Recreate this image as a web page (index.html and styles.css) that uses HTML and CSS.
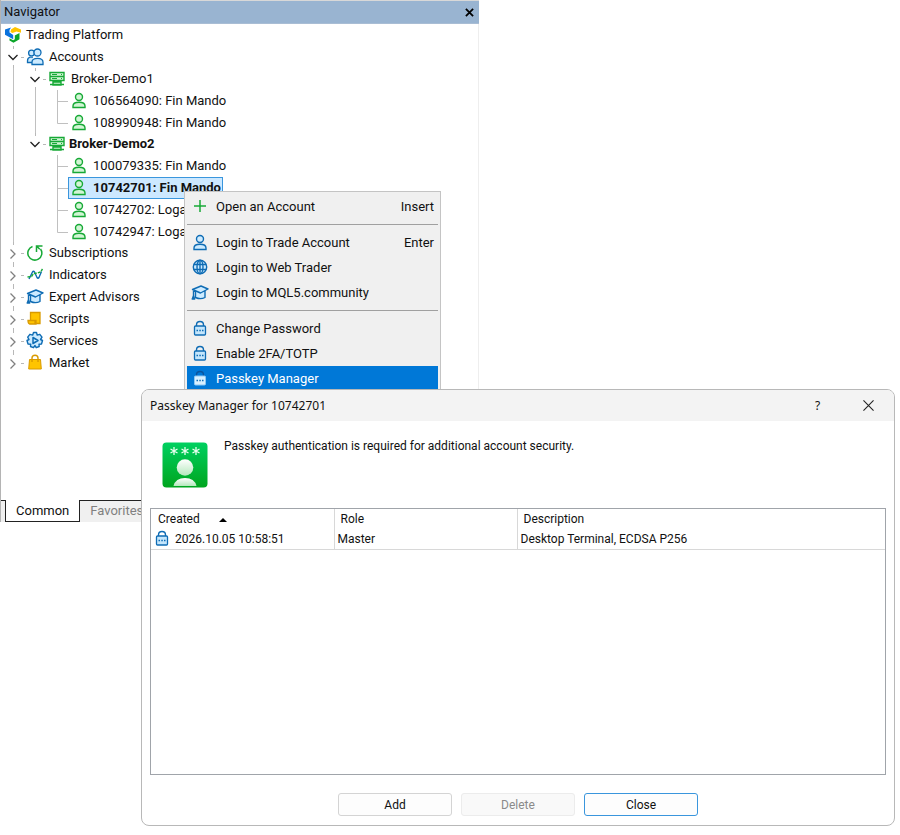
FILE: index.html
```html
<!DOCTYPE html>
<html lang="en">
<head>
<meta charset="utf-8">
<title>Navigator</title>
<link rel="stylesheet" href="styles.css">
</head>
<body>
<svg class="defs" aria-hidden="true">
  <defs>
    <linearGradient id="badge" x1="0" y1="0" x2="0" y2="1"><stop offset="0" stop-color="#00d060"/><stop offset="1" stop-color="#00a51e"/></linearGradient>
    <linearGradient id="bust" x1="0" y1="0" x2="0" y2="1"><stop offset="0" stop-color="#ffffff"/><stop offset="1" stop-color="#b4e8bc"/></linearGradient>
  </defs>
  <symbol id="line" viewBox="0 0 22 22"><path d="M11.5 0v22" stroke="#c0c0c0"/></symbol>
  <symbol id="tee" viewBox="0 0 22 22"><path d="M11.5 0v22M11.5 11.5h11" stroke="#c0c0c0" fill="none"/></symbol>
  <symbol id="elbow" viewBox="0 0 22 22"><path d="M11.5 0v11.5h11" stroke="#c0c0c0" fill="none"/></symbol>
  <symbol id="open" viewBox="0 0 22 22"><path d="M11.5 0v3M11.5 19v3M19 11.5h3" stroke="#b8b8b8"/><path d="M6.5 9l4.500 4.500L15.500 9" fill="none" stroke="#222" stroke-width="1.300"/></symbol>
  <symbol id="open-last" viewBox="0 0 22 22"><path d="M11.5 0v3M19 11.5h3" stroke="#b8b8b8"/><path d="M6.5 9l4.500 4.500L15.500 9" fill="none" stroke="#222" stroke-width="1.300"/></symbol>
  <symbol id="closed" viewBox="0 0 22 22"><path d="M11.5 0v3M11.5 20v2M19 11.5h3" stroke="#b8b8b8"/><path d="M8.500 7.500l4.500 4.500L8.500 16.500" fill="none" stroke="#808080" stroke-width="1.300"/></symbol>
  <symbol id="closed-last" viewBox="0 0 22 22"><path d="M11.5 0v3M19 11.5h3" stroke="#b8b8b8"/><path d="M8.500 7.500l4.500 4.500L8.500 16.500" fill="none" stroke="#808080" stroke-width="1.300"/></symbol>
  <symbol id="logo" viewBox="0 0 22 22">
    <path d="M3 5.500L9 3.500 7.500 6v2.500l3.700 2.500v4.300L3 10.800z" fill="#0a72dc"/>
    <path d="M9 5.500L13 3l6 2.500v3.300L14.500 7.500 10.500 9 8.500 8z" fill="#ffc400"/>
    <path d="M12.800 11.500L17.500 9v6.200l-6 3.600-4-2.300v-2.200l3.700 2 1.600-1z" fill="#0ba52a"/>
  </symbol>
  <symbol id="users" viewBox="0 0 22 22" fill="#cdebff" stroke="#0f6cb4" stroke-width="1.300">
    <circle cx="7.500" cy="7" r="2.900"/><path d="M8.500 16.500H3.500v-1.500q0-3 2.500-3.800h3"/>
    <circle cx="13.500" cy="6.500" r="3.500"/><path d="M8 18.500v-2.300q0-3.900 5.500-3.900t5.500 3.900v2.300z"/>
  </symbol>
  <symbol id="server" viewBox="0 0 22 22"><path d="M4 4.500h14v4H4zM4 8.500h14v4H4zM7 14h8v3H7zM4 16.500h14" fill="#d2f5d5" stroke="#17a936" stroke-width="1.400"/><path d="M6 6.500h5M15 6.500h1M6 10.500h5M15 10.500h1" stroke="#17a936"/></symbol>
  <symbol id="person" viewBox="0 0 22 22"><g class="person" stroke-width="1.400"><circle cx="11" cy="7" r="3.500"/><path d="M5 17.500V16q0-3.700 6-3.700t6 3.700v1.500z"/></g></symbol>
  <symbol id="refresh" viewBox="0 0 22 22"><path d="M8.500 4.500A7 7 0 1 0 16.500 7" fill="none" stroke="#17a936" stroke-width="1.500"/><path d="M12.500 10V4h6M12.800 4.300l3 3" fill="none" stroke="#17a936" stroke-width="1.500"/></symbol>
  <symbol id="indicator" viewBox="0 0 22 22" fill="none" stroke-width="1.400"><path d="M5 15l3.500-7q1-1.500 2 0l2.500 5.500q1 1.500 2 0l2.500-6" stroke="#0f6cb4"/><path d="M3.500 13l4-.5 2-3 4-.5 3-1 2-3" stroke="#17a936" stroke-dasharray="3 1"/></symbol>
  <symbol id="cap" viewBox="0 0 22 22" fill="#cdebff" stroke="#0f6cb4" stroke-width="1.400" stroke-linejoin="round"><path d="M6.500 9v6.500q5 2.300 9.500 0V9z"/><path d="M3.500 7.500L12 4l7 3-7.500 4zM4.500 8v7"/><path d="M4.500 14l-1.300 3h2.500z" fill="#0f6cb4"/></symbol>
  <symbol id="script" viewBox="0 0 22 22"><path d="M6.500 4.500h9.500v11h-5v-3H6.500zM4 12.500h8v3.500H5.500Q4 15.500 4 12.500zM11 15.500h5.500" fill="#ffc400" stroke="#d99a00" stroke-width="1.300"/></symbol>
  <symbol id="gear" viewBox="0 0 22 22" fill="#cdebff" stroke="#0f6cb4" stroke-width="1.400" stroke-linejoin="round"><path d="M9.500 2.500h3l.7 2.600 2.600-.8 2.200 2.900-1.500 2.300 2 1-1 3.500-2.500.2.200 2.300-3 1.200L11 15.500l-1.500 2.200-3-1.200.2-2.300-2.700-.2-1-3.500 2-1L3.700 7.200l2.200-2.900 2.800.8z"/><path d="M9 7.500l5 3-5 3z" stroke-width="1.500"/></symbol>
  <symbol id="bag" viewBox="0 0 22 22"><path d="M5.500 7.500h11l.8 9.500H4.700z" fill="#ffc400" stroke="#d99a00"/><path d="M8 10V6q0-2.800 3-2.800T14 6v4" fill="none" stroke="#d99a00" stroke-width="1.400"/></symbol>
  <symbol id="plus" viewBox="0 0 22 22"><path d="M11 4v12M5 10h12" stroke="#17a936" stroke-width="1.500"/></symbol>
  <symbol id="globe" viewBox="0 0 22 22" fill="none" stroke="#0f6cb4" stroke-width="1.400"><circle cx="11" cy="10" r="6.700" fill="#cdebff"/><ellipse cx="11" cy="10" rx="3" ry="6.700"/><path d="M11 3.300v13.400M5 7.500h12M5 12.500h12"/></symbol>
  <symbol id="lock" viewBox="0 0 22 22"><path d="M7.500 8.500V7q0-3.500 3.500-3.500T14.500 7v1.500" fill="none" stroke="#0f6cb4" stroke-width="1.400"/><rect class="lock-body" x="5.500" y="8" width="11" height="9" rx="1" stroke-width="1.300"/><path class="lock-dots" d="M7.500 12.500h1.500M10.300 12.500h1.500M13 12.500h1.500" stroke-width="1.300"/></symbol>
  <symbol id="lock-light" viewBox="0 0 22 22"><path d="M7.500 8.500V7q0-3.500 3.500-3.500T14.500 7v1.500" fill="none" stroke="#0a559e" stroke-width="1.400"/><rect x="5.500" y="8" width="11" height="9" rx="1" fill="#d8f0ff" stroke="#8cc8f4"/><path d="M7.500 12.500h1.500M10.300 12.500h1.500M13 12.500h1.500" stroke="#0f6cb4" stroke-width="1.300"/></symbol>
</svg>

<main class="desktop">
  <section class="navigator" aria-label="Navigator">
    <header class="nav-title">
      <h1>Navigator</h1>
      <button type="button" class="nav-close" aria-label="Close Navigator"><svg viewBox="0 0 10 10"><path d="M1 1l8 8M9 1l-8 8" stroke="#000" stroke-width="2"/></svg></button>
    </header>
    <div class="tree">
      <div class="row"><svg class="cell"><use href="#logo"/></svg><span class="label root">Trading Platform</span></div>
      <ul>
        <li>
          <div class="row"><svg class="cell"><use href="#open"/></svg><svg class="cell"><use href="#users"/></svg><span class="label">Accounts</span></div>
          <ul>
            <li>
              <div class="row"><svg class="cell"><use href="#line"/></svg><svg class="cell"><use href="#open"/></svg><svg class="cell"><use href="#server"/></svg><span class="label">Broker-Demo1</span></div>
              <ul class="logins">
                <li class="row"><svg class="cell"><use href="#line"/></svg><svg class="cell"><use href="#line"/></svg><svg class="cell"><use href="#tee"/></svg><span class="login"><svg class="cell"><use href="#person"/></svg><span class="label">106564090: Fin Mando</span></span></li>
                <li class="row"><svg class="cell"><use href="#line"/></svg><svg class="cell"><use href="#line"/></svg><svg class="cell"><use href="#elbow"/></svg><span class="login"><svg class="cell"><use href="#person"/></svg><span class="label">108990948: Fin Mando</span></span></li>
              </ul>
            </li>
            <li>
              <div class="row"><svg class="cell"><use href="#line"/></svg><svg class="cell"><use href="#open-last"/></svg><svg class="cell"><use href="#server"/></svg><span class="label strong">Broker-Demo2</span></div>
              <ul class="logins">
                <li class="row"><svg class="cell"><use href="#line"/></svg><span class="cell"></span><svg class="cell"><use href="#tee"/></svg><span class="login"><svg class="cell"><use href="#person"/></svg><span class="label">100079335: Fin Mando</span></span></li>
                <li class="row"><svg class="cell"><use href="#line"/></svg><span class="cell"></span><svg class="cell"><use href="#tee"/></svg><span class="login selected"><svg class="cell"><use href="#person"/></svg><span class="label">10742701: Fin Mando</span></span></li>
                <li class="row"><svg class="cell"><use href="#line"/></svg><span class="cell"></span><svg class="cell"><use href="#tee"/></svg><span class="login"><svg class="cell"><use href="#person"/></svg><span class="label">10742702: Loga</span></span></li>
                <li class="row"><svg class="cell"><use href="#line"/></svg><span class="cell"></span><svg class="cell"><use href="#elbow"/></svg><span class="login"><svg class="cell"><use href="#person"/></svg><span class="label">10742947: Loga</span></span></li>
              </ul>
            </li>
          </ul>
        </li>
        <li class="row"><svg class="cell"><use href="#closed"/></svg><svg class="cell"><use href="#refresh"/></svg><span class="label">Subscriptions</span></li>
        <li class="row"><svg class="cell"><use href="#closed"/></svg><svg class="cell"><use href="#indicator"/></svg><span class="label">Indicators</span></li>
        <li class="row"><svg class="cell"><use href="#closed"/></svg><svg class="cell"><use href="#cap"/></svg><span class="label">Expert Advisors</span></li>
        <li class="row"><svg class="cell"><use href="#closed"/></svg><svg class="cell"><use href="#script"/></svg><span class="label">Scripts</span></li>
        <li class="row"><svg class="cell"><use href="#closed"/></svg><svg class="cell"><use href="#gear"/></svg><span class="label">Services</span></li>
        <li class="row"><svg class="cell"><use href="#closed-last"/></svg><svg class="cell"><use href="#bag"/></svg><span class="label">Market</span></li>
      </ul>
    </div>
    <div class="tabs">
      <button type="button" class="tab active">Common</button>
      <button type="button" class="tab">Favorites</button>
    </div>
  </section>

  <div class="menu">
    <button type="button" class="item"><svg class="cell"><use href="#plus"/></svg><span>Open an Account</span><kbd>Insert</kbd></button>
    <hr>
    <button type="button" class="item"><svg class="cell blue"><use href="#person"/></svg><span>Login to Trade Account</span><kbd>Enter</kbd></button>
    <button type="button" class="item"><svg class="cell"><use href="#globe"/></svg><span>Login to Web Trader</span></button>
    <button type="button" class="item"><svg class="cell"><use href="#cap"/></svg><span>Login to MQL5.community</span></button>
    <hr>
    <button type="button" class="item"><svg class="cell"><use href="#lock"/></svg><span>Change Password</span></button>
    <button type="button" class="item"><svg class="cell"><use href="#lock"/></svg><span>Enable 2FA/TOTP</span></button>
    <button type="button" class="item current"><svg class="cell"><use href="#lock-light"/></svg><span>Passkey Manager</span></button>
  </div>

  <section class="dialog" role="dialog" aria-labelledby="dialog-title">
    <header class="dialog-title">
      <h2 id="dialog-title">Passkey Manager for 10742701</h2>
      <button type="button" class="caption-button">?</button>
      <button type="button" class="caption-button" aria-label="Close dialog"><svg viewBox="0 0 12 12"><path d="M.5.5l11 11M11.500.5l-11 11" stroke="#222" stroke-width="1.200"/></svg></button>
    </header>
    <div class="dialog-body">
      <div class="intro">
        <svg class="badge" viewBox="0 0 46 46">
          <rect x=".5" y=".5" width="45" height="45" rx="4" fill="url(#badge)"/>
          <g stroke="#e8ffee" stroke-width="1.300"><path id="star" d="M12 5v8M8.500 7l7 4M15.500 7l-7 4"/><use href="#star" x="11"/><use href="#star" x="22"/></g>
          <circle cx="23" cy="25.500" r="8.300" fill="url(#bust)"/>
          <path d="M11.500 44q2-8 11.500-8t11.500 8z" fill="url(#bust)"/>
        </svg>
        <p>Passkey authentication is required for additional account security.</p>
      </div>
      <div class="list">
        <table>
          <thead><tr><th class="created">Created<svg class="sort" viewBox="0 0 8 4"><path d="M0 4l4-4 4 4z"/></svg></th><th class="role">Role</th><th>Description</th></tr></thead>
          <tbody><tr><td><span class="stamp"><svg class="cell"><use href="#lock"/></svg>2026.10.05 10:58:51</span></td><td>Master</td><td>Desktop Terminal, ECDSA P256</td></tr></tbody>
        </table>
      </div>
      <div class="actions">
        <button type="button">Add</button>
        <button type="button" disabled>Delete</button>
        <button type="button" class="default">Close</button>
      </div>
    </div>
  </section>
</main>
</body>
</html>
```

FILE: styles.css
```css
* { box-sizing: border-box; }
body {
  margin: 0;
  background: #fff;
  color: #111;
  font: 13px/22px Roboto, "Noto Sans", sans-serif;
}
button { font: inherit; color: inherit; border: 0; background: none; padding: 0; }
h1, h2, p { margin: 0; font-size: inherit; font-weight: 400; }
ul { list-style: none; margin: 0; padding: 0; }
.defs { display: block; width: 0; height: 0; }
.desktop { position: relative; min-height: 100vh; }

.navigator { display: flex; flex-direction: column; width: 479px; min-height: 522px; border-left: 1px solid #b4b4b4; }
.nav-title {
  display: flex; align-items: center; justify-content: space-between;
  height: 24px; padding: 0 4px 0 3px;
  background: #99b4d1; border-top: 1px solid #d8d8d8; border-bottom: 1px solid #a9bdd4;
}
.nav-close { display: flex; padding: 1px; }
.nav-close svg { width: 9px; height: 9px; }
.tree { flex: 1; padding-left: 1px; border-right: 1px solid #eee; }
.row { display: flex; height: 22px; white-space: nowrap; }
.cell { flex: none; width: 22px; height: 22px; }
.label { padding-left: 3px; }
.root { padding-left: 2px; }
.strong { padding-left: 1px; font-weight: 700; }
.logins { margin-bottom: -1px; }
.login { display: flex; }
.selected { padding-right: 2px; background: #cce8ff; outline: 1px solid #3a96dd; outline-offset: -1px; font-weight: 700; }
.blue { --fill: #cdebff; --stroke: #0f6cb4; }
.person { fill: var(--fill, #d2f5d5); stroke: var(--stroke, #17a936); }

.tabs { display: flex; height: 22px; padding-left: 4px; background: linear-gradient(#222, #222) 0 0 / 100% 1px no-repeat #f0f0f0; }
.tab { padding: 0 10px; color: #808080; }
.active { background: #fff; color: #111; border: 1px solid #222; border-top: 0; }

.menu { position: absolute; left: 184px; top: 191px; width: 257px; padding: 2px; background: #f0f0f0; border: 1px solid #c4c4c4; }
.item { display: flex; align-items: center; width: 100%; height: 25px; padding: 0 4px 0 2px; text-align: left; }
.item span { flex: 1; padding-left: 5px; }
.item kbd { font: inherit; }
.menu hr { height: 1px; margin: 5px 0; border: 0; background: #a0a0a0; }
.current { background: #0078d7; color: #fff; }
.lock-body { fill: #c4e6fc; stroke: #0f6cb4; }
.lock-dots { stroke: #0f6cb4; }

.dialog {
  position: absolute; left: 141px; right: 5px; top: 389px;
  background: #fff; border: 1px solid #b8b8b8; border-radius: 8px; overflow: hidden;
}
.dialog-title { display: flex; align-items: center; height: 31px; padding: 0 0 0 8px; background: #f3f3f3; font-family: "Noto Sans", sans-serif; font-size: 12px; }
.dialog-title h2 { flex: 1; }
.caption-button { display: flex; align-items: center; justify-content: center; width: 51px; height: 31px; }
.caption-button svg { width: 11px; height: 11px; }
.dialog-body { padding: 21px 8px 9px; font-size: 12px; line-height: 18px; }
.intro { display: flex; gap: 16px; padding-left: 12px; }
.intro p { margin-top: -5px; }
.badge { width: 46px; height: 46px; }
.list { min-height: 267px; margin-top: 20px; border: 1px solid #a0a4aa; }
table { width: 100%; border-collapse: collapse; table-layout: fixed; }
th, td { padding: 0 3px; height: 20px; text-align: left; font-weight: 400; border-left: 1px solid #d8d8d8; }
th { padding: 0 6px; }
th:first-child, td:first-child { border-left: 0; }
th:first-child { padding-left: 7px; }
td { border-bottom: 1px solid #d8d8d8; }
.created, .role { width: 183px; }
.sort { width: 8px; height: 4px; margin-left: 19px; vertical-align: middle; }
.stamp { display: flex; align-items: center; gap: 2px; height: 18px; }
td:first-child { padding-left: 0; }
.actions { display: flex; justify-content: center; gap: 9px; margin-top: 18px; }
.actions button { width: 114px; height: 23px; border: 1px solid #d4d4d4; border-radius: 3px; background: #fdfdfd; }
.actions button:disabled { color: #8a8a8a; border-color: #ececec; background: #f9f9f9; }
.actions .default { border-color: #3a96dd; }
```
